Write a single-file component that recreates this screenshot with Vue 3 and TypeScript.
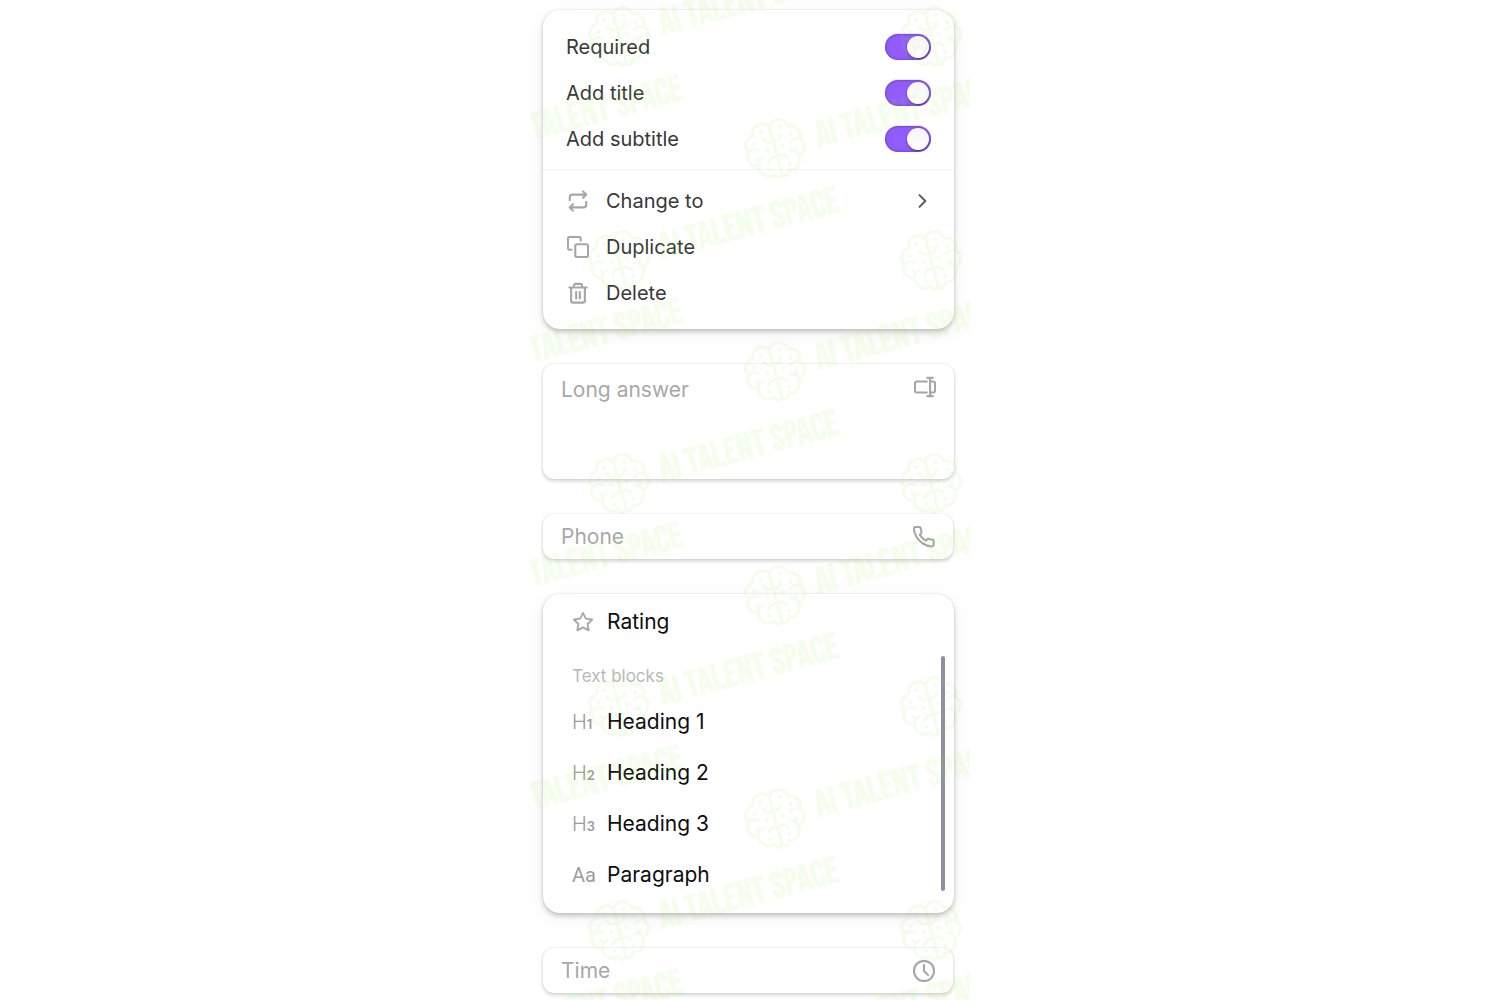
<script setup lang="ts">
import { ref } from 'vue'

interface Toggle {
  id: string
  label: string
  on: boolean
}

interface Block {
  label: string
  glyph: string
  sub: string
}

const toggles = ref<Toggle[]>([
  { id: 'required', label: 'Required', on: true },
  { id: 'add-title', label: 'Add title', on: true },
  { id: 'add-subtitle', label: 'Add subtitle', on: true },
])

const blocks: Block[] = [
  { label: 'Heading 1', glyph: 'H', sub: '1' },
  { label: 'Heading 2', glyph: 'H', sub: '2' },
  { label: 'Heading 3', glyph: 'H', sub: '3' },
  { label: 'Paragraph', glyph: 'Aa', sub: '' },
]

const longAnswer = ref('')
const phone = ref('')
const time = ref('')

// Watermark marks sit on a staggered grid; each one is a brain with its caption.
const columns: { x: number; ys: number[] }[] = [
  { x: -67, ys: [148, 371, 595, 818, 1042] },
  { x: 89, ys: [36, 260, 483, 706, 930] },
  { x: 245, ys: [148, 371, 595, 818, 1042] },
  { x: 401, ys: [36, 260, 483, 706, 930] },
]
const marks = columns.flatMap((c) => c.ys.map((y) => ({ x: c.x, y })))
</script>

<template>
  <main class="page">
    <section class="card menu" aria-label="Block settings">
      <div class="group toggles">
        <label v-for="t in toggles" :key="t.id" class="row" :for="t.id">
          <span>{{ t.label }}</span>
          <input :id="t.id" v-model="t.on" type="checkbox" role="switch" class="switch" />
        </label>
      </div>
      <div class="group actions">
        <button type="button" class="row">
          <svg class="icon" viewBox="0 0 24 24">
            <path d="M17.500 1.500L21 5l-3.500 3.500M3 11V8a3 3 0 0 1 3-3h15M6.500 22.500L3 19l3.500-3.500M21 13v3a3 3 0 0 1-3 3H3" />
          </svg>
          <span class="name">Change to</span>
          <svg class="chevron" viewBox="0 0 24 24"><path d="M9 5l7 7-7 7" /></svg>
        </button>
        <button type="button" class="row">
          <svg class="icon" viewBox="0 0 24 24">
            <rect x="9" y="9" width="14" height="14" rx="2" />
            <path d="M5 15H3a2 2 0 0 1-2-2V3a2 2 0 0 1 2-2h10a2 2 0 0 1 2 2v2" />
          </svg>
          <span class="name">Duplicate</span>
        </button>
        <button type="button" class="row">
          <svg class="icon" viewBox="0 0 24 24">
            <path d="M2.500 6h19M19.500 6v14.500a2 2 0 0 1-2 2h-11a2 2 0 0 1-2-2V6M7.500 6V4a2 2 0 0 1 2-2h5a2 2 0 0 1 2 2v2M10 11v7M14 11v7" />
          </svg>
          <span class="name">Delete</span>
        </button>
      </div>
    </section>

    <div class="card field tall">
      <textarea v-model="longAnswer" aria-label="Long answer" placeholder="Long answer"></textarea>
      <svg class="icon" viewBox="0 0 24 24">
        <path d="M14 6H3a2 2 0 0 0-2 2v8a2 2 0 0 0 2 2h11M17.500 2v20M14.500 2h6M14.500 22h6M17.500 6H21a2 2 0 0 1 2 2v8a2 2 0 0 1-2 2h-3.500" />
      </svg>
    </div>

    <div class="card field short">
      <input v-model="phone" type="tel" aria-label="Phone" placeholder="Phone" />
      <svg class="icon" viewBox="0 0 24 24">
        <path d="M22.500 17v3.200a2.200 2.200 0 0 1-2.400 2.200 21.500 21.500 0 0 1-9.400-3.300 21.200 21.200 0 0 1-6.500-6.500A21.500 21.500 0 0 1 .9 3.200 2.200 2.200 0 0 1 3 .9h3.300a2.200 2.200 0 0 1 2.200 1.900c.1 1 .4 2 .7 3a2.200 2.200 0 0 1-.5 2.300L7.400 9.500a17.300 17.300 0 0 0 6.500 6.500l1.400-1.400a2.200 2.200 0 0 1 2.300-.5c1 .3 2 .6 3 .7a2.200 2.200 0 0 1 1.900 2.200z" />
      </svg>
    </div>

    <section class="card picker" aria-label="Blocks">
      <button type="button" class="block">
        <span class="glyph">
          <svg class="star" viewBox="0 0 24 24">
            <path d="M12 2l3.100 6.300 6.900 1-5 4.900 1.200 6.900L12 17.800l-6.200 3.300L7 14.200 2 9.300l6.900-1z" />
          </svg>
        </span>
        <span>Rating</span>
      </button>
      <h2>Text blocks</h2>
      <button v-for="b in blocks" :key="b.label" type="button" class="block">
        <span class="glyph" :class="{ letters: !b.sub }" aria-hidden="true">{{ b.glyph }}<b v-if="b.sub">{{ b.sub }}</b></span>
        <span>{{ b.label }}</span>
      </button>
      <div class="thumb"></div>
    </section>

    <div class="card field short">
      <input v-model="time" type="text" aria-label="Time" placeholder="Time" />
      <svg class="icon" viewBox="0 0 24 24">
        <circle cx="12" cy="12" r="11" />
        <path d="M12 5.500V12l4.500 4.500" />
      </svg>
    </div>

    <svg class="watermark" aria-hidden="true">
      <defs>
        <g id="brain" transform="translate(0 2)">
          <path d="M0-24c-5-8-17-6-18 4-8 1-13 9-8 15-6 5-3 15 5 16-1 9 7 15 13 12 3 6 7 6 8 1 1 5 5 5 8-1 6 3 14-3 13-12 8-1 11-11 5-16 5-6 0-14-8-15-1-10-13-12-18-4zM0-24V24M-26-5c4-2 8-1 10 2M-21 11c1-4 4-6 8-6M0-9c-5 1-9-2-9-6M0 8c-4-3-9-1-10 4M26-5c-4-2-8-1-10 2M21 11c-1-4-4-6-8-6M0-9c5 1 9-2 9-6M0 8c4-3 9-1 10 4" />
          <g class="dot">
            <circle cx="-10" cy="-21" r="2" />
            <circle cx="10" cy="-21" r="2" />
            <circle cx="-19" cy="-11" r="2" />
            <circle cx="19" cy="-11" r="2" />
            <circle cx="-8" cy="-2" r="2" />
            <circle cx="8" cy="-2" r="2" />
            <circle cx="-20" cy="4" r="2" />
            <circle cx="20" cy="4" r="2" />
            <circle cx="-10" cy="17" r="2" />
            <circle cx="10" cy="17" r="2" />
          </g>
        </g>
      </defs>
      <g v-for="m in marks" :key="`${m.x},${m.y}`" :transform="`translate(${m.x} ${m.y}) rotate(-15)`">
        <use href="#brain" />
        <text x="42" y="10">AI TALENT SPACE</text>
      </g>
    </svg>
  </main>
</template>

<style>
body {
  margin: 0;
  background: #fff;
}
</style>

<style scoped>
.page {
  position: relative;
  box-sizing: border-box;
  display: flex;
  flex-direction: column;
  gap: 35px;
  max-width: 440px;
  margin: 0 auto;
  padding: 10px 16px 7px 13px;
  overflow: hidden;
  font-family: Inter, "Liberation Sans", sans-serif;
  font-size: 20px;
  color: #38383a;
}

button,
input,
textarea {
  margin: 0;
  border: 0;
  background: none;
  font: inherit;
  color: inherit;
}

.card {
  box-sizing: border-box;
  background: #fff;
}

.menu,
.picker {
  border-radius: 17px;
  box-shadow: 0 0 2px rgba(0, 0, 0, 0.12), 0 3px 5px rgba(0, 0, 0, 0.2), 0 5px 22px rgba(0, 0, 0, 0.05);
}

.group {
  display: flex;
  flex-direction: column;
}

.toggles {
  padding: 14px 0 7px;
  border-bottom: 1px solid #f2f2f2;
}

.actions {
  padding: 8px 0 13px;
}

.row {
  display: flex;
  align-items: center;
  height: 46px;
  padding: 0 23px;
  text-align: left;
}

.toggles .row {
  justify-content: space-between;
}

.actions .row {
  padding: 0 22px 0 24px;
}

.name {
  flex: 1;
  margin-left: 17px;
}

.icon {
  flex: none;
  width: 22px;
  height: 22px;
  fill: none;
  stroke: #a6a6a6;
  stroke-width: 2.3;
  stroke-linecap: round;
  stroke-linejoin: round;
}

.chevron {
  width: 20px;
  height: 20px;
  fill: none;
  stroke: #5c5c5e;
  stroke-width: 2.4;
  stroke-linecap: round;
  stroke-linejoin: round;
}

.switch {
  appearance: none;
  display: flex;
  justify-content: flex-start;
  box-sizing: border-box;
  width: 46px;
  height: 26px;
  padding: 2px;
  border-radius: 13px;
  background: #c9c9ce;
  box-shadow: inset 0 0 3px rgba(30, 10, 90, 0.5), 0 -1px 1px rgba(0, 0, 0, 0.1);
}

.switch:checked {
  justify-content: flex-end;
  background: #925cfb;
}

.switch::before {
  content: "";
  width: 22px;
  height: 22px;
  border-radius: 50%;
  background: linear-gradient(#f4f4f4, #fff);
  box-shadow: 0 1px 2px rgba(30, 10, 90, 0.6);
}

.field {
  display: flex;
  border-radius: 11px;
  box-shadow: 0 0 2px rgba(0, 0, 0, 0.1), 0 2px 4px rgba(0, 0, 0, 0.18);
  font-size: 21px;
}

.tall {
  height: 115px;
  padding: 12px 18px;
}

.short {
  align-items: center;
  height: 45px;
  margin-right: 1px;
  padding: 0 18px;
}

.field input,
.field textarea {
  flex: 1;
  min-width: 0;
  padding: 0;
  line-height: 27px;
  resize: none;
  outline: none;
}

.field ::placeholder {
  color: #a8a8a8;
  opacity: 1;
}

.picker {
  position: relative;
  display: flex;
  flex-direction: column;
  padding: 2px 0 13px;
  color: #0e0e10;
}

.picker h2 {
  margin: 0;
  padding: 10px 29px 1px;
  font-size: 17px;
  font-weight: 400;
  line-height: 38px;
  color: #b8b8b8;
}

.block {
  display: flex;
  align-items: center;
  height: 51px;
  padding: 0 29px;
  font-size: 21px;
  text-align: left;
}

.glyph {
  display: flex;
  align-items: baseline;
  width: 35px;
  font-size: 20px;
  font-weight: 300;
  color: #9c9c9c;
}

.glyph b {
  font-size: 13px;
  font-weight: 600;
}

.letters {
  font-family: Roboto, "Liberation Sans", sans-serif;
  font-weight: 400;
}

.star {
  width: 22px;
  height: 22px;
  fill: none;
  stroke: #a8a8a8;
  stroke-width: 2;
  stroke-linejoin: round;
}

.thumb {
  position: absolute;
  top: 62px;
  right: 9px;
  bottom: 22px;
  width: 4px;
  border-radius: 2px;
  background: #908ea2;
}

.watermark {
  position: absolute;
  inset: 0;
  width: 100%;
  height: 100%;
  pointer-events: none;
  fill: none;
  stroke: rgba(150, 240, 70, 0.1);
  stroke-width: 3;
}

.watermark text,
.dot {
  fill: rgba(150, 240, 70, 0.1);
  stroke: none;
}

.watermark text {
  font-family: "Bebas Neue", "Noto Sans ExtraCondensed", "Open Sans Condensed", "Liberation Sans Narrow", sans-serif;
  font-size: 37px;
  font-weight: 700;
}
</style>
